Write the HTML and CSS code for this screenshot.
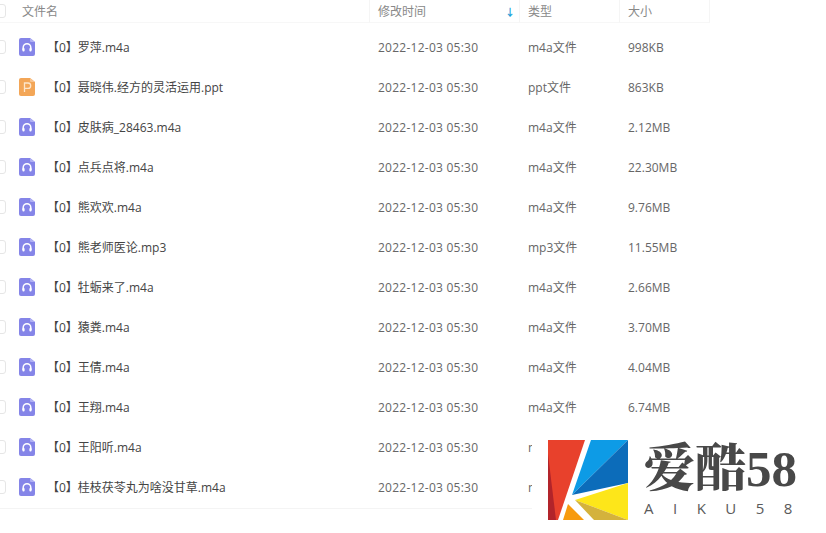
FILE: index.html
```html
<!DOCTYPE html>
<html lang="zh-CN">
<head>
  <meta charset="UTF-8" />
  <title>文件列表</title>
  <link rel="stylesheet" href="styles.css">
</head>
<body>
  <svg class="sprites" width="0" height="0">
    <symbol id="audio" viewBox="0 0 16 18">
      <path d="M2 0H11L16 4V16a2 2 0 0 1-2 2H2a2 2 0 0 1-2-2V2a2 2 0 0 1 2-2Z" fill="#8585e8"/>
      <path d="M11 0L16 4H12a1 1 0 0 1-1-1Z" fill="#b0b0f4"/>
      <path d="M4.2 12V9.5a3.8 3.8 0 0 1 7.6 0V12" fill="none" stroke="#fff" stroke-width="1.5"/>
      <rect x="3.4" y="10" width="2.2" height="3.6" rx="1" fill="#fff"/>
      <rect x="10.4" y="10" width="2.2" height="3.6" rx="1" fill="#fff"/>
    </symbol>
    <symbol id="slides" viewBox="0 0 16 18">
      <path d="M2 0H11L16 4V16a2 2 0 0 1-2 2H2a2 2 0 0 1-2-2V2a2 2 0 0 1 2-2Z" fill="#f3a657"/>
      <path d="M11 0L16 4H12a1 1 0 0 1-1-1Z" fill="#f8c48f"/>
      <path d="M5.5 14V5H9a2.6 2.6 0 0 1 0 5.4H5.5" fill="none" stroke="#fde6cc" stroke-width="1.3"/>
    </symbol>
  </svg>

  <div class="file-table">
    <div class="row head">
      <div class="cell name"><span class="check"></span><span class="head-title">文件名</span></div>
      <div class="cell time">修改时间<span class="sort">↓</span></div>
      <div class="cell type">类型</div>
      <div class="cell size">大小</div>
    </div>

    <div class="row"><div class="cell name"><span class="check"></span><svg class="icon"><use href="#audio"/></svg><span class="title">【0】罗萍.m4a</span></div><div class="cell time">2022-12-03 05:30</div><div class="cell type">m4a文件</div><div class="cell size">998KB</div></div>
    <div class="row"><div class="cell name"><span class="check"></span><svg class="icon"><use href="#slides"/></svg><span class="title">【0】聂晓伟.经方的灵活运用.ppt</span></div><div class="cell time">2022-12-03 05:30</div><div class="cell type">ppt文件</div><div class="cell size">863KB</div></div>
    <div class="row"><div class="cell name"><span class="check"></span><svg class="icon"><use href="#audio"/></svg><span class="title">【0】皮肤病_28463.m4a</span></div><div class="cell time">2022-12-03 05:30</div><div class="cell type">m4a文件</div><div class="cell size">2.12MB</div></div>
    <div class="row"><div class="cell name"><span class="check"></span><svg class="icon"><use href="#audio"/></svg><span class="title">【0】点兵点将.m4a</span></div><div class="cell time">2022-12-03 05:30</div><div class="cell type">m4a文件</div><div class="cell size">22.30MB</div></div>
    <div class="row"><div class="cell name"><span class="check"></span><svg class="icon"><use href="#audio"/></svg><span class="title">【0】熊欢欢.m4a</span></div><div class="cell time">2022-12-03 05:30</div><div class="cell type">m4a文件</div><div class="cell size">9.76MB</div></div>
    <div class="row"><div class="cell name"><span class="check"></span><svg class="icon"><use href="#audio"/></svg><span class="title">【0】熊老师医论.mp3</span></div><div class="cell time">2022-12-03 05:30</div><div class="cell type">mp3文件</div><div class="cell size">11.55MB</div></div>
    <div class="row"><div class="cell name"><span class="check"></span><svg class="icon"><use href="#audio"/></svg><span class="title">【0】牡蛎来了.m4a</span></div><div class="cell time">2022-12-03 05:30</div><div class="cell type">m4a文件</div><div class="cell size">2.66MB</div></div>
    <div class="row"><div class="cell name"><span class="check"></span><svg class="icon"><use href="#audio"/></svg><span class="title">【0】猿粪.m4a</span></div><div class="cell time">2022-12-03 05:30</div><div class="cell type">m4a文件</div><div class="cell size">3.70MB</div></div>
    <div class="row"><div class="cell name"><span class="check"></span><svg class="icon"><use href="#audio"/></svg><span class="title">【0】王倩.m4a</span></div><div class="cell time">2022-12-03 05:30</div><div class="cell type">m4a文件</div><div class="cell size">4.04MB</div></div>
    <div class="row"><div class="cell name"><span class="check"></span><svg class="icon"><use href="#audio"/></svg><span class="title">【0】王翔.m4a</span></div><div class="cell time">2022-12-03 05:30</div><div class="cell type">m4a文件</div><div class="cell size">6.74MB</div></div>
    <div class="row"><div class="cell name"><span class="check"></span><svg class="icon"><use href="#audio"/></svg><span class="title">【0】王阳听.m4a</span></div><div class="cell time">2022-12-03 05:30</div><div class="cell type">m4a文件</div><div class="cell size"></div></div>
    <div class="row"><div class="cell name"><span class="check"></span><svg class="icon"><use href="#audio"/></svg><span class="title">【0】桂枝茯苓丸为啥没甘草.m4a</span></div><div class="cell time">2022-12-03 05:30</div><div class="cell type">m4a文件</div><div class="cell size"></div></div>
  </div>

  <!-- watermark sits over the table -->
  <div class="watermark">
    <svg class="logo" viewBox="0 0 80 80" width="80" height="80">
      <polygon points="0,0 37,0 10,80 0,80" fill="#e8412c"/>
      <polygon points="0,14 8,80 0,80" fill="#b2242a"/>
      <polygon points="43,0 80,0 24,55" fill="#0d9be6"/>
      <polygon points="80,0 80,43 24,55" fill="#0c6cba"/>
      <polygon points="27,60 80,43 80,80" fill="#fde61a"/>
      <polygon points="27,60 80,80 46,80" fill="#d4b23c"/>
      <polygon points="20,64 36,80 15,80" fill="#f79a0e"/>
    </svg>
    <div class="brand">
      <div class="brand-name">爱酷58</div>
      <div class="brand-sub">AIKU58</div>
    </div>
  </div>
</body>
</html>
```

FILE: styles.css
```css
* {
  box-sizing: border-box;
}

html, body {
  margin: 0;
  padding: 0;
  height: 100%;
  overflow: hidden;
  background: #fff;
  font-family: "Open Sans", "Noto Sans CJK SC", sans-serif;
  font-size: 12px;
  color: #666;
}

.sprites {
  display: block;
  height: 0;
}

.row {
  display: grid;
  grid-template-columns: 370px 150px 100px 90px;
  height: 40px;
  align-items: center;
}

.row.head {
  height: 27px;
  padding-bottom: 4px;
  color: #888;
}

.row:last-child {
  height: 42px;
  padding-bottom: 1px;
  border-bottom: 1px solid #f4f4f4;
}

.cell {
  height: 100%;
  display: flex;
  align-items: center;
  padding-left: 8px;
  white-space: nowrap;
}

.cell.time {
  letter-spacing: .25px;
}

.head .cell {
  border-right: 1px solid #f5f5f5;
  border-bottom: 1px solid #f7f7f7;
}

.head .time {
  justify-content: space-between;
  padding-right: 4px;
  letter-spacing: 0;
}

.cell.name {
  padding-left: 0;
}

.check {
  width: 14px;
  height: 14px;
  margin-left: -8px;
  border: 1px solid #e6e6e6;
  border-radius: 3px;
  flex: none;
}

.head-title {
  margin-left: 16px;
}

.sort {
  color: #1e9fd8;
  font-weight: 700;
  font-size: 10px;
}

.icon {
  width: 16px;
  height: 18px;
  margin-left: 13px;
  flex: none;
}

.title {
  margin-left: 12px;
  color: #444;
}

.watermark {
  position: absolute;
  left: 532px;
  top: 432px;
  width: 294px;
  height: 101px;
  background: #fff;
  display: flex;
  align-items: flex-start;
  padding: 8px 0 0 16px;
}

.logo {
  display: block;
  flex: none;
}

.brand {
  margin-left: 16px;
  color: #484848;
}

.brand-name {
  font-family: "Liberation Serif", "Noto Serif CJK SC", "Noto Sans CJK SC", serif;
  font-weight: 900;
  font-size: 51px;
  line-height: 58px;
  white-space: nowrap;
}

.brand-sub {
  font-family: "Open Sans", sans-serif;
  font-size: 15px;
  line-height: 18px;
  letter-spacing: 19.5px;
  white-space: nowrap;
  margin-top: 1px;
  color: #5a5a5a;
}
```
